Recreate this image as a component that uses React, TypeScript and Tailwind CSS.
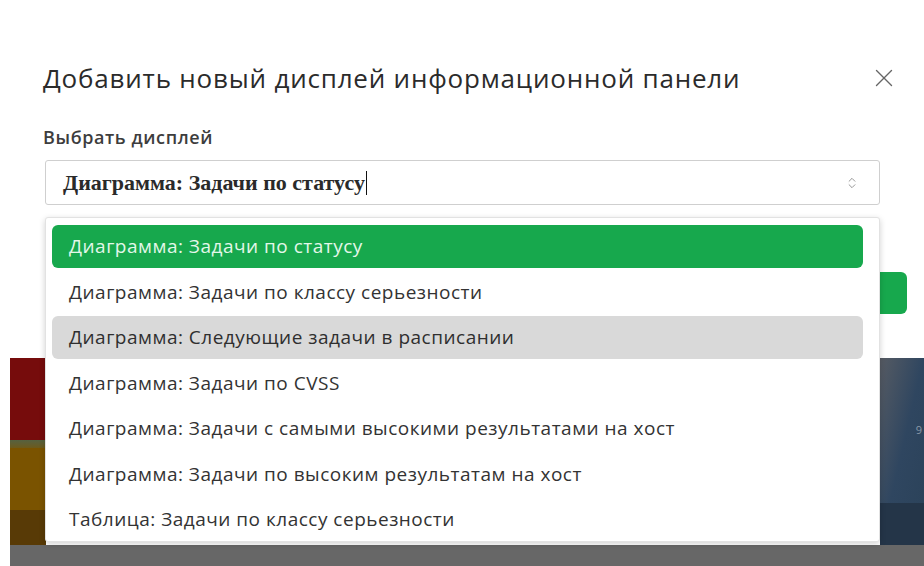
import { ChevronsUpDown, X } from "lucide-react";

const displayOptions = [
  "Диаграмма: Задачи по статусу",
  "Диаграмма: Задачи по классу серьезности",
  "Диаграмма: Следующие задачи в расписании",
  "Диаграмма: Задачи по CVSS",
  "Диаграмма: Задачи с самыми высокими результатами на хост",
  "Диаграмма: Задачи по высоким результатам на хост",
  "Таблица: Задачи по классу серьезности",
];

const selectedIndex = 0;
const hoveredIndex = 2;

function optionClass(index: number): string {
  if (index === selectedIndex) {
    return "bg-[#17a84d] text-[#e3f7e9]";
  }

  if (index === hoveredIndex) {
    return "bg-[#d9d9d9] text-[#2f2f2f]";
  }

  return "bg-white text-[#333333]";
}

function DisplayDropdown() {
  return (
    <ul className="absolute left-[45px] top-[217px] w-[835px] rounded-[3px] border border-[#e2e2e2] bg-white px-[6px] pt-[7px] shadow-[0_2px_6px_rgba(0,0,0,0.18)]">
      {displayOptions.map((option, index) => (
        <li
          key={option}
          className={`mr-[10px] mb-[2.5px] flex h-[43px] items-center rounded-[6px] px-[17px] text-[19px] tracking-[0.5px] last:mb-0 ${optionClass(index)}`}
        >
          {option}
        </li>
      ))}
    </ul>
  );
}

export default function App() {
  return (
    <div className="relative flex h-[566px] w-[924px] flex-col overflow-hidden bg-white font-['Open_Sans',sans-serif]">
      {/* dialog */}
      <section className="flex h-[358px] flex-col bg-white pl-[43px] pt-[58px]">
        <header className="flex items-center justify-between pr-[25px]">
          <h2 className="text-[26px] leading-[40px] tracking-[0.8px] text-[#2b2b2b]">
            Добавить новый дисплей информационной панели
          </h2>
          <X className="h-[30px] w-[30px] text-[#666]" strokeWidth={1.1} />
        </header>
        <label className="mt-[27px] text-[18px] font-semibold leading-[24px] tracking-[0.6px] text-[#3d3d3d]">
          Выбрать дисплей
        </label>
        <div className="mt-[11px] ml-[2px] flex h-[45px] w-[835px] items-center justify-between rounded-[3px] border border-[#cfcfcf] pl-[17px] pr-[20px]">
          <span className="flex items-center font-['Liberation_Serif',serif] text-[22px] font-bold text-[#2a2a2a]">
            Диаграмма: Задачи по статусу
            <span className="ml-px h-[24px] w-[1.5px] bg-[#111]" />
          </span>
          <ChevronsUpDown className="h-[14px] w-[14px] text-[#888]" strokeWidth={1.5} />
        </div>
        <div className="mt-[67px] flex justify-end pr-[17px]">
          <button type="button" className="h-[42px] w-[150px] rounded-[6px] bg-[#17a84d] text-[15px] text-white">
            Добавить
          </button>
        </div>
      </section>

      {/* dashboard behind the dialog */}
      <div className="flex flex-1">
        <div className="w-[10px] bg-white" />
        <div className="flex w-[36px] flex-col">
          <div className="h-[82px] bg-[#760c0c]" />
          <div className="h-[8px] bg-gradient-to-b from-[#55613f] to-[#6d5a1a]" />
          <div className="h-[62px] bg-[#7a5300]" />
          <div className="h-[35px] bg-[#583a06]" />
        </div>
        <div className="flex-1" />
        <div className="flex w-[44px] flex-col bg-gradient-to-br from-[#565b63] via-[#2f4660] to-[#2b4259]">
          <div className="flex h-[145px] items-center justify-end pr-[2px] text-[11px] text-[#8a98a8]">9</div>
          <div className="flex-1 bg-[#243548]" />
        </div>
      </div>
      <div className="ml-[10px] h-[21px] bg-[#676767]" />

      <DisplayDropdown />
    </div>
  );
}
